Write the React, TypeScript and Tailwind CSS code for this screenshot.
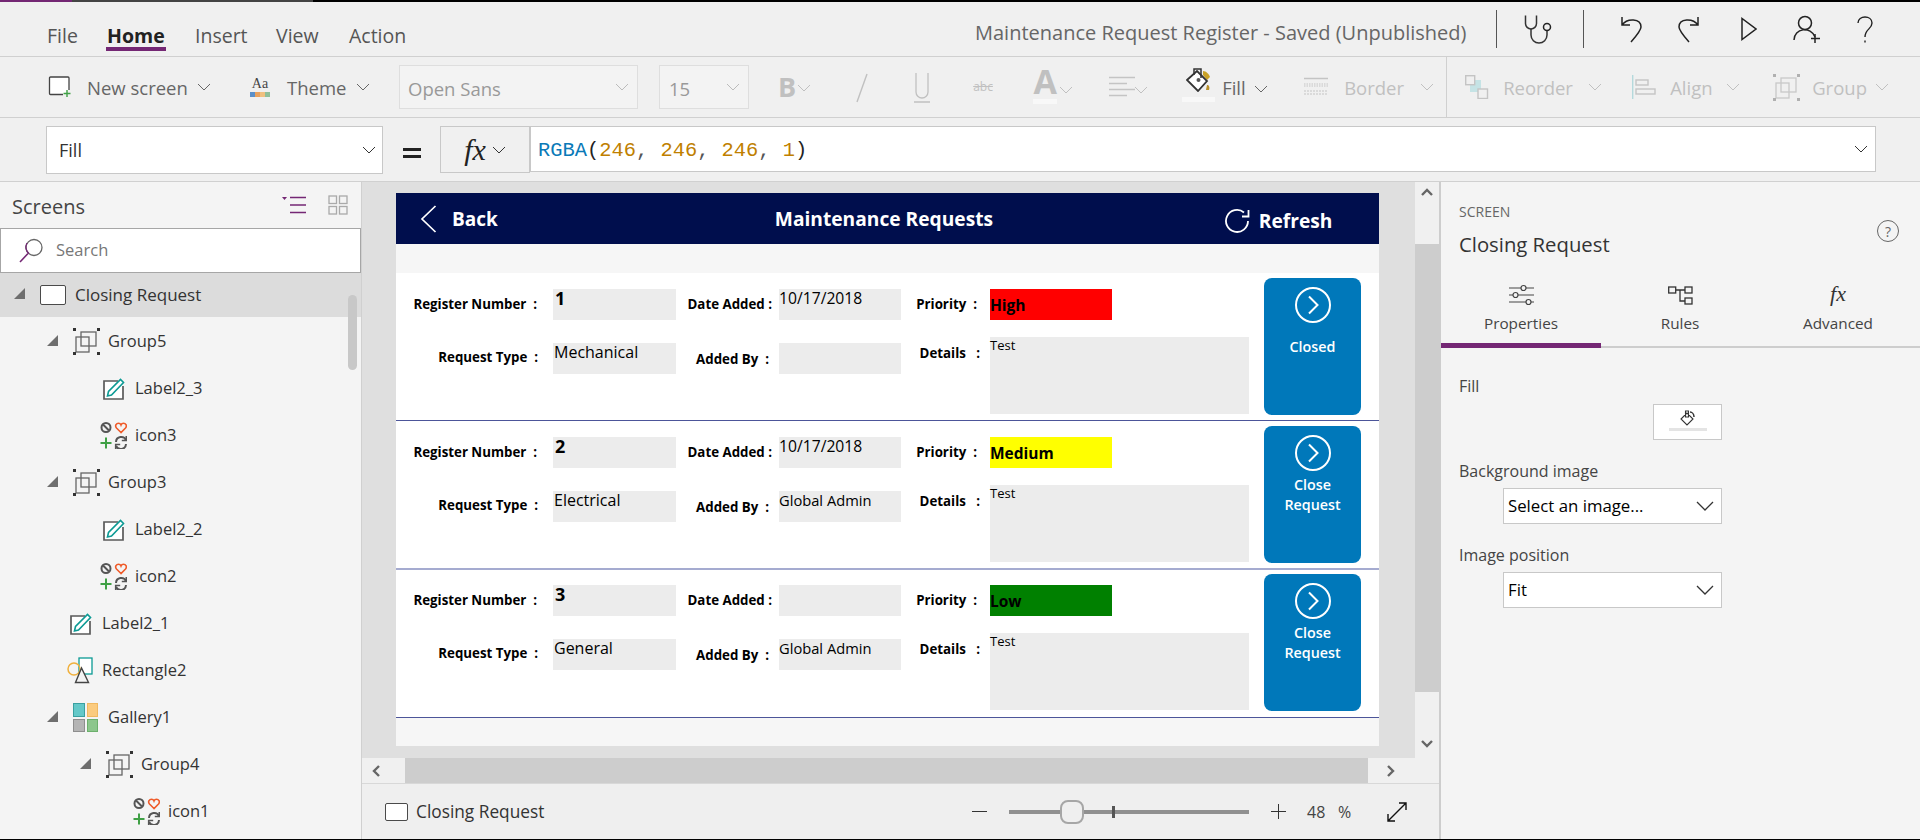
import type { ReactNode } from "react";

const purple = "#742774";

function Chevron({ className = "" }: { className?: string }) {
  return (
    <svg viewBox="0 0 14 8" className={"w-[14px] h-[8px] shrink-0 " + className}>
      <polyline points="1,1 7,7 13,1" fill="none" stroke="currentColor" strokeWidth="1" />
    </svg>
  );
}

function NewScreenIcon() {
  return (
    <svg viewBox="0 0 24 22" className="w-[24px] h-[22px]">
      <path d="M15 18.5H2.5a1 1 0 0 1-1-1V2a1 1 0 0 1 1-1H20a1 1 0 0 1 1 1v12" fill="#fff" stroke="#444" strokeWidth="1.3" />
      <path d="M19 14v7M15.5 17.5h7" stroke="#3fa045" strokeWidth="1.4" />
    </svg>
  );
}

function ThemeIcon() {
  return (
    <div className="w-[20px] flex flex-col items-center">
      <span className="font-['Liberation_Serif',serif] text-[14px] leading-[14px] text-[#444]">Aa</span>
      <div className="flex w-full h-[5px] mt-[1px]">
        <div className="flex-1 bg-[#5b8fc9]" />
        <div className="flex-1 bg-[#e8a15e]" />
        <div className="flex-1 bg-[#f0c080]" />
        <div className="flex-1 bg-[#8fbf9a]" />
      </div>
    </div>
  );
}

function BucketIcon() {
  return (
    <svg viewBox="0 0 25 24" className="w-[25px] h-[24px] shrink-0">
      <path d="M17 3c3 0 6 3 7 6l-3 3-4-5z" fill="#c9a227" />
      <path d="M21 17c2 0 3 2 2 5h-3z" fill="#b9902a" />
      <path d="M1 12 11 3l10 10-9 10z" fill="#fff" stroke="#333" strokeWidth="1.800" />
      <path d="M8 7V1h7v9" fill="none" stroke="#333" strokeWidth="1.500" />
      <circle cx="12.500" cy="12" r="2" fill="#555" />
    </svg>
  );
}

function BorderIcon() {
  return (
    <svg viewBox="0 0 24 20" className="w-[24px] h-[20px]" stroke="#c4c4c4" fill="none">
      <path d="M0 1.5h24" strokeWidth="1.5" />
      <path d="M0 7h24M0 9h24" strokeWidth="1" strokeDasharray="1.5 1" />
      <path d="M0 14h24M0 17h24" strokeWidth="1" strokeDasharray="2 1" />
    </svg>
  );
}

function ReorderIcon() {
  return (
    <svg viewBox="0 0 24 24" className="w-[24px] h-[24px]" fill="none">
      <rect x="5" y="5" width="11" height="12" fill="#c5e3e5" />
      <rect x="0.7" y="0.7" width="9" height="9" stroke="#c4c4c4" strokeWidth="1.4" fill="#f0f0f0" />
      <rect x="13" y="14" width="9.5" height="9.5" stroke="#c4c4c4" strokeWidth="1.4" fill="#f0f0f0" />
    </svg>
  );
}

function AlignIcon() {
  return (
    <svg viewBox="0 0 24 24" className="w-[24px] h-[24px]" fill="none">
      <path d="M0.7 0v24" stroke="#b4d9dc" strokeWidth="1.4" />
      <rect x="4" y="5" width="12" height="5" stroke="#c4c4c4" strokeWidth="1.4" />
      <rect x="4" y="14" width="19" height="5" stroke="#c4c4c4" strokeWidth="1.4" />
    </svg>
  );
}

function GroupIcon({ dark = false }: { dark?: boolean }) {
  const line = dark ? "#666" : "#c8c8c8";
  const dot = dark ? "#333" : "#b0b0b0";
  return (
    <svg viewBox="0 0 27 27" className="w-[27px] h-[27px]" fill="none">
      <rect x="8" y="4" width="15" height="14" stroke={line} strokeWidth="1.300" />
      <rect x="3" y="9" width="13" height="15" stroke={line} strokeWidth="1.300" />
      <rect x="0" y="0" width="3" height="3" fill={dot} />
      <rect x="24" y="0" width="3" height="3" fill={dot} />
      <rect x="0" y="24" width="3" height="3" fill={dot} />
      <rect x="24" y="24" width="3" height="3" fill={dot} />
    </svg>
  );
}

function Tri() {
  return (
    <svg viewBox="0 0 11 11" className="w-[11px] h-[11px] shrink-0 mr-[15px] mb-[3px]">
      <polygon points="11,0 11,11 0,11" fill="#6e6e6e" />
    </svg>
  );
}

function ScreenIcon({ small = false }: { small?: boolean }) {
  return <div className={(small ? "w-[23px] h-[18px]" : "w-[26px] h-[20px] mr-[9px]") + " shrink-0 bg-white border-[1.5px] border-[#4a4a4a] rounded-[2px]"} />;
}

function LabelIcon() {
  return (
    <svg viewBox="0 0 22 22" className="w-[22px] h-[22px] shrink-0 mr-[10px]" fill="none">
      <path d="M15 3H1v18h19V8" stroke="#5a5a5a" strokeWidth="1.700" fill="#fff" />
      <path d="M4.500 18l1-4.500L17.500 1.500l3 3L8.500 17z" fill="#fff" stroke="#0c9a94" strokeWidth="1.600" />
    </svg>
  );
}

function ControlIcon() {
  return (
    <svg viewBox="0 0 27 27" className="w-[27px] h-[27px] shrink-0 mr-[8px]" fill="none">
      <circle cx="6" cy="5.500" r="4.500" stroke="#555" strokeWidth="2" />
      <path d="M3 2.500l6 6" stroke="#555" strokeWidth="2" />
      <path d="M21 10.500 16.500 6C14.500 3.500 16.500 1.200 18.500 1.200 19.800 1.200 20.600 2 21 3 21.400 2 22.200 1.200 23.500 1.200 25.500 1.200 27.500 3.500 25.500 6z" stroke="#ef5a28" strokeWidth="1.600" />
      <path d="M6 15.500v11M.5 21h11" stroke="#3fa045" strokeWidth="2" />
      <path d="M16 20c.3-6 8-6.500 10-2M26 22c-.3 6-8 6.500-10 2" stroke="#555" strokeWidth="2" />
      <path d="M26.300 14v4.500h-4.500M15.700 27v-4.500h4.500" stroke="#555" strokeWidth="1.600" />
    </svg>
  );
}

function ShapesIcon() {
  return (
    <svg viewBox="0 0 27 27" className="w-[27px] h-[27px] shrink-0 mr-[8px]" fill="none">
      <rect x="12" y="1" width="13" height="16" fill="#fff" stroke="#0c9a94" strokeWidth="1.3" />
      <circle cx="7" cy="12" r="6" stroke="#f0b03c" strokeWidth="1.5" />
      <path d="M14.500 11 8.500 25.500h13z" fill="#f4f4f4" stroke="#444" strokeWidth="1.4" />
    </svg>
  );
}

function GalleryIcon() {
  return (
    <div className="w-[25px] h-[29px] mr-[10px] grid grid-cols-2 gap-[2px] shrink-0">
      <div className="bg-[#64c8c8] border border-[#3aa0a0]" />
      <div className="bg-[#fbcb7e] border border-[#f0b860]" />
      <div className="bg-[#b4b4b4] border border-[#8e8e8e]" />
      <div className="bg-[#8cc68c] border border-[#6cb06c]" />
    </div>
  );
}

type TreeItem = { label: string; pad: string; tri?: boolean; icon: ReactNode; selected?: boolean };

const tree: TreeItem[] = [
  { label: "Group5", pad: "pl-[47px]", tri: true, icon: <div className="mr-[8px]"><GroupIcon dark /></div> },
  { label: "Label2_3", pad: "pl-[103px]", icon: <LabelIcon /> },
  { label: "icon3", pad: "pl-[100px]", icon: <ControlIcon /> },
  { label: "Group3", pad: "pl-[47px]", tri: true, icon: <div className="mr-[8px]"><GroupIcon dark /></div> },
  { label: "Label2_2", pad: "pl-[103px]", icon: <LabelIcon /> },
  { label: "icon2", pad: "pl-[100px]", icon: <ControlIcon /> },
  { label: "Label2_1", pad: "pl-[70px]", icon: <LabelIcon /> },
  { label: "Rectangle2", pad: "pl-[67px]", icon: <ShapesIcon /> },
  { label: "Gallery1", pad: "pl-[47px]", tri: true, icon: <GalleryIcon /> },
  { label: "Group4", pad: "pl-[80px]", tri: true, icon: <div className="mr-[8px]"><GroupIcon dark /></div> },
  { label: "icon1", pad: "pl-[133px]", icon: <ControlIcon /> },
];

function TreeRow({ item }: { item: TreeItem }) {
  return (
    <div className={"h-[47px] flex items-center text-[16.5px] text-[#333] " + item.pad}>
      {item.tri && <Tri />}
      {item.icon}
      <span>{item.label}</span>
    </div>
  );
}

function LeftPanel() {
  return (
    <aside className="w-[362px] shrink-0 bg-[#f4f4f4] border-r border-[#d0d0d0] flex flex-col relative overflow-hidden">
      <div className="h-[46px] shrink-0 flex items-center pl-[12px] text-[#444] text-[20px]">
        <span className="w-[71px] mt-[4px]">Screens</span>
        <svg viewBox="0 0 24 18" className="w-[24px] h-[18px] ml-[199px]" fill="none">
          <polygon points="0,1 5,1 2.500,4" fill={purple} />
          <path d="M8 1.500h16M8 9h16M8 16.500h16" stroke={purple} strokeWidth="1.6" />
        </svg>
        <svg viewBox="0 0 20 20" className="w-[20px] h-[20px] ml-[22px]" fill="none" stroke="#aaa" strokeWidth="1.3">
          <rect x="1" y="1" width="7.500" height="7.500" />
          <rect x="11.500" y="1" width="7.500" height="7.500" />
          <rect x="1" y="11.500" width="7.500" height="7.500" />
          <rect x="11.500" y="11.500" width="7.500" height="7.500" />
        </svg>
      </div>
      <div className="h-[45px] shrink-0 bg-white border border-[#a6a6a6] flex items-center pl-[18px]">
        <svg viewBox="0 0 25 25" className="w-[25px] h-[25px]" fill="none">
          <circle cx="15" cy="9.500" r="8" stroke="#666" strokeWidth="1.3" />
          <path d="M9 15.500 1 24" stroke={purple} strokeWidth="1.6" />
          <path d="M10 15.500A8 8 0 0 1 8 5" stroke={purple} strokeWidth="1.3" />
        </svg>
        <span className="ml-[12px] text-[16.500px] text-[#777]">Search</span>
      </div>
      <div className="h-[44px] shrink-0 mb-[1px] bg-[#dcdcdc] flex items-center pl-[14px] text-[17px] text-[#333]">
        <Tri />
        <ScreenIcon />
        <span>Closing Request</span>
      </div>
      {tree.map((item) => (
        <TreeRow key={item.label} item={item} />
      ))}
      <div className="absolute left-[348px] top-[113px] w-[9px] h-[75px] rounded-full bg-[#c8c8c8]" />
    </aside>
  );
}

type Req = {
  num: string;
  type: string;
  date: string;
  by: string;
  priority: string;
  color: string;
  action: string[];
  line: string;
  height: string;
  top: string;
};

const requests: Req[] = [
  { num: "1", type: "Mechanical", date: "10/17/2018", by: "", priority: "High", color: "bg-[#ff0000]", action: ["Closed"], line: "border-b border-[#4c5599]", height: "h-[148px]", top: "pt-[16px]" },
  { num: "2", type: "Electrical", date: "10/17/2018", by: "Global Admin", priority: "Medium", color: "bg-[#ffff00]", action: ["Close", "Request"], line: "border-b-2 border-[#a5abd0]", height: "h-[149px]", top: "pt-[16px]" },
  { num: "3", type: "General", date: "", by: "Global Admin", priority: "Low", color: "bg-[#008000]", action: ["Close", "Request"], line: "border-b border-[#4c5599]", height: "h-[148px]", top: "pt-[15px]" },
];

function FieldLabel({ text, className }: { text: string; className: string }) {
  return <div className={"h-[31px] flex items-center justify-end pt-[1px] font-bold text-[13.300px] text-black whitespace-pre " + className}>{text}</div>;
}

function RequestRow({ r }: { r: Req }) {
  return (
    <div className={"bg-white flex text-black " + r.height + " " + r.line + " " + r.top}>
      <div className="w-[157px] shrink-0">
        <FieldLabel text="Register Number  :" className="pr-[16px]" />
        <FieldLabel text="Request Type  :" className="pr-[15px] mt-[22px]" />
      </div>
      <div className="w-[123px] shrink-0">
        <div className="h-[31px] bg-[#ececec] pl-[2px] font-bold text-[18px] leading-[19px]">{r.num}</div>
        <div className="h-[31px] bg-[#ececec] pl-[1px] mt-[23px] text-[16px] leading-[19px] font-medium">{r.type}</div>
      </div>
      <div className="w-[103px] shrink-0">
        <FieldLabel text="Date Added :" className="pr-[7px]" />
        <FieldLabel text="Added By  :" className="pr-[10px] mt-[24px]" />
      </div>
      <div className="w-[122px] shrink-0">
        <div className="h-[31px] bg-[#ececec] text-[15.700px] leading-[18px]">{r.date}</div>
        <div className="h-[31px] bg-[#ececec] mt-[23px] text-[14.700px] leading-[18px] font-medium">{r.by}</div>
      </div>
      <div className="w-[89px] shrink-0">
        <FieldLabel text="Priority  :" className="pr-[13px]" />
        <FieldLabel text="Details   :" className="pr-[10px] mt-[18px]" />
      </div>
      <div className="w-[259px] shrink-0">
        <div className={"w-[122px] h-[31px] flex items-center font-bold text-[15.500px] pt-[2px] " + r.color}>{r.priority}</div>
        <div className="h-[77px] bg-[#ececec] mt-[17px] text-[13px] leading-[16px] font-medium">Test</div>
      </div>
      <div className="ml-[15px] w-[97px] h-[137px] -mt-[11px] rounded-[8px] bg-[#0078ba] flex flex-col items-center pt-[8px] text-white font-semibold text-[14.300px] leading-[20px]">
        <svg viewBox="0 0 38 38" className="w-[38px] h-[38px] mb-[3px] shrink-0" fill="none" stroke="#fff">
          <circle cx="19" cy="19" r="17" strokeWidth="2" />
          <path d="M15 10.500 23.500 19 15 27.500" strokeWidth="2" />
        </svg>
        <div className="h-[40px] flex flex-col items-center justify-center">
          {r.action.map((t) => (
            <span key={t}>{t}</span>
          ))}
        </div>
      </div>
    </div>
  );
}

function AppPreview() {
  return (
    <div className="w-[983px] h-[553px] bg-[#f6f6f6] flex flex-col">
      <div className="h-[51px] shrink-0 bg-[#000e4d] flex items-center text-white font-bold text-white">
        <svg viewBox="0 0 17 28" className="w-[17px] h-[28px] ml-[24px]" fill="none" stroke="#fff" strokeWidth="1.7">
          <path d="M15.500 1 2 14l13.500 13" />
        </svg>
        <span className="ml-[15px] text-[19px] mt-[1px]">Back</span>
        <span className="ml-[277px] w-[218px] text-[19.200px] whitespace-nowrap mt-[1px]">Maintenance Requests</span>
        <svg viewBox="0 0 26 26" className="w-[26px] h-[26px] ml-[231px] mt-[5px]" fill="none" stroke="#fff" strokeWidth="1.8">
          <path d="M24 13a11 11 0 1 1-4-8.500" />
          <path d="M24.500 2v6.500H18" />
        </svg>
        <span className="ml-[9px] text-[19.200px] mt-[6px]">Refresh</span>
      </div>
      <div className="h-[29px] shrink-0" />
      {requests.map((r) => (
        <RequestRow key={r.num} r={r} />
      ))}
    </div>
  );
}

function ToolLabel({ children, className = "" }: { children: ReactNode; className?: string }) {
  return <span className={"text-[18.500px] whitespace-nowrap mt-[2px] " + className}>{children}</span>;
}

function Toolbar() {
  return (
    <div className="h-[61px] shrink-0 border-b border-[#d0d0d0] flex items-center pl-[48px] text-[#666]">
      <NewScreenIcon />
      <ToolLabel className="ml-[15px] w-[101px]">New screen</ToolLabel>
      <Chevron className="ml-[9px]" />
      <div className="ml-[39px]"><ThemeIcon /></div>
      <ToolLabel className="ml-[17px] w-[60px]">Theme</ToolLabel>
      <Chevron className="ml-[9px]" />
      <div className="ml-[29px] w-[239px] h-[44px] border border-[#dedede] bg-[#f3f3f3] flex items-center justify-between px-[8px] text-[#999]">
        <span className="text-[18.500px] mt-[3px]">Open Sans</span>
        <Chevron className="text-[#bbb]" />
      </div>
      <div className="ml-[21px] w-[90px] h-[44px] border border-[#dedede] bg-[#f3f3f3] flex items-center justify-between pl-[9px] pr-[8px] text-[#999]">
        <span className="text-[18.500px] mt-[3px]">15</span>
        <Chevron className="text-[#bbb]" />
      </div>
      <div className="flex items-center text-[#c0c0c0]">
        <span className="ml-[29px] text-[27px] font-bold">B</span>
        <Chevron className="ml-[1px] mt-[2px]" />
        <svg viewBox="0 0 12 30" className="w-[12px] h-[30px] ml-[45px] mt-[2px]" fill="none" stroke="#c0c0c0" strokeWidth="1.4">
          <path d="M11 1 1 29" />
        </svg>
        <svg viewBox="0 0 18 32" className="w-[18px] h-[32px] ml-[45px] mt-[2px]" fill="none" stroke="#c0c0c0" strokeWidth="1.3">
          <path d="M3 1v19a6 6 0 0 0 12 0V1M1 30h16" />
        </svg>
        <span className="ml-[42px] text-[12px] line-through w-[23px]">abc</span>
        <span className="ml-[37px] text-[34px] font-bold leading-[36px] border-b-[5px] border-[#f8f8f8] w-[24px] flex justify-center -mt-[8px]">A</span>
        <Chevron className="ml-[2px] mt-[6px]" />
        <svg viewBox="0 0 26 22" className="w-[26px] h-[22px] ml-[36px]" fill="none" stroke="#c4c4c4" strokeWidth="1.3">
          <path d="M0 1.500h26M0 7.500h18M0 13.500h26M0 19.500h18" />
        </svg>
        <Chevron className="-ml-[1px] mt-[6px]" />
      </div>
      <div className="ml-[37px] w-[26px] flex flex-col items-center -mt-[5px]">
        <BucketIcon />
        <div className="w-[33px] h-[5px] shrink-0 bg-[#f8f8f8] mt-[5px]" />
      </div>
      <ToolLabel className="ml-[11px] w-[21px]">Fill</ToolLabel>
      <Chevron className="ml-[11px] mt-[4px]" />
      <div className="ml-[36px]"><BorderIcon /></div>
      <ToolLabel className="ml-[16px] w-[56px] text-[#c0c0c0]">Border</ToolLabel>
      <Chevron className="ml-[20px] text-[#c0c0c0]" />
      <div className="ml-[12px] h-[60px] border-l border-[#d0d0d0]" />
      <div className="ml-[18px]"><ReorderIcon /></div>
      <ToolLabel className="ml-[14px] w-[69px] text-[#c0c0c0]">Reorder</ToolLabel>
      <Chevron className="ml-[16px] text-[#c0c0c0]" />
      <div className="ml-[30px]"><AlignIcon /></div>
      <ToolLabel className="ml-[14px] w-[44px] text-[#c0c0c0]">Align</ToolLabel>
      <Chevron className="ml-[12px] text-[#c0c0c0]" />
      <div className="ml-[33px]"><GroupIcon /></div>
      <ToolLabel className="ml-[12px] w-[55px] text-[#c0c0c0]">Group</ToolLabel>
      <Chevron className="ml-[8px] text-[#c0c0c0]" />
    </div>
  );
}

function TopBar() {
  const stroke = "#222";
  return (
    <div className="h-[55px] shrink-0 border-b border-[#d0d0d0] flex items-center pl-[47px] text-[19.500px] text-[#555]">
      <span className="w-[60px] mt-[14px]">File</span>
      <span className="w-[88px] mt-[14px] font-bold text-[#222] relative">
        Home
        <span className="absolute left-[-1px] top-[26px] w-[60px] h-[4px] bg-[#742774]" />
      </span>
      <span className="w-[81px] mt-[14px]">Insert</span>
      <span className="w-[73px] mt-[14px]">View</span>
      <span className="w-[626px] mt-[14px]">Action</span>
      <span className="w-[521px] mt-[8px] text-[20px] text-[#666] whitespace-nowrap">Maintenance Request Register - Saved (Unpublished)</span>
      <div className="h-[38px] border-l border-[#555]" />
      <svg viewBox="0 0 28 30" className="w-[28px] h-[30px] ml-[27px]" fill="none" stroke="#333" strokeWidth="1.5">
        <path d="M1.500 1.500v8a5.500 5.500 0 0 0 11 0v-8" />
        <path d="M7 15v6a8 8 0 0 0 16 0v-4" />
        <circle cx="23" cy="13" r="3.500" stroke="#222" />
      </svg>
      <div className="h-[38px] border-l border-[#555] ml-[31px]" />
      <svg viewBox="0 0 22 28" className="w-[22px] h-[28px] ml-[37px]" fill="none" stroke={stroke} strokeWidth="1.5">
        <path d="M1 2v8h8M1 10C6 3 20 3 20 12c0 3-3 7-10 15" />
      </svg>
      <svg viewBox="0 0 22 28" className="w-[22px] h-[28px] ml-[34px]" fill="none" stroke={stroke} strokeWidth="1.5">
        <path d="M21 2v8h-8M21 10C16 3 2 3 2 12c0 3 3 7 10 15" />
      </svg>
      <svg viewBox="0 0 16 24" className="w-[16px] h-[24px] ml-[42px]" fill="none" stroke={stroke} strokeWidth="1.5">
        <path d="M1 1.500v21L15 12z" />
      </svg>
      <svg viewBox="0 0 28 28" className="w-[28px] h-[28px] ml-[36px]" fill="none" stroke={stroke} strokeWidth="1.5">
        <circle cx="12" cy="8" r="6.500" />
        <path d="M1 25c0-12 17-14 21-3" />
        <path d="M22 19v9M18 23.500h9" />
      </svg>
      <svg viewBox="0 0 16 28" className="w-[16px] h-[28px] ml-[36px]" fill="none" stroke={stroke} strokeWidth="1.4">
        <path d="M1 8C1 0 15 0 15 8c0 6-7 6-7 14" />
        <path d="M8 25.500v2" />
      </svg>
    </div>
  );
}

function FormulaBar() {
  return (
    <div className="h-[64px] shrink-0 border-b border-[#d0d0d0] flex items-start pt-[8px] pl-[46px]">
      <div className="w-[337px] h-[48px] bg-white border border-[#c8c8c8] flex items-center justify-between pl-[12px] pr-[6px] text-[18px] text-[#333]">
        <span>Fill</span>
        <Chevron className="text-[#333]" />
      </div>
      <div className="w-[18px] ml-[20px] mt-[22px] h-[10px] border-y-[3px] border-[#222]" />
      <div className="ml-[19px] w-[90px] h-[47px] bg-[#f0f0f0] border border-[#c8c8c8] flex items-center justify-center gap-[6px] text-[#222]">
        <span className="font-['Liberation_Serif',serif] italic text-[30px] leading-[30px]">fx</span>
        <Chevron className="text-[#333]" />
      </div>
      <div className="w-[1346px] h-[46px] bg-white border border-[#c8c8c8] flex items-center justify-between pl-[7px] pr-[7px]">
        <span className="font-['Liberation_Mono',monospace] text-[20.400px] mt-[5px]">
          <span className="text-[#0a7ab8]">RGBA</span>
          <span className="text-[#222]">(</span>
          <span className="text-[#c07f00]">246</span>
          <span className="text-[#555]">, </span>
          <span className="text-[#c07f00]">246</span>
          <span className="text-[#555]">, </span>
          <span className="text-[#c07f00]">246</span>
          <span className="text-[#555]">, </span>
          <span className="text-[#c07f00]">1</span>
          <span className="text-[#222]">)</span>
        </span>
        <Chevron className="text-[#333]" />
      </div>
    </div>
  );
}

function VerticalScroll() {
  return (
    <div className="w-[24px] shrink-0 bg-[#f0f0f0] flex flex-col">
      <div className="h-[62px] flex justify-center pt-[6px]">
        <svg viewBox="0 0 12 8" className="w-[12px] h-[8px]" fill="none" stroke="#666" strokeWidth="2.400">
          <path d="M1 7l5-5 5 5" />
        </svg>
      </div>
      <div className="h-[448px] bg-[#cdcdcd]" />
      <div className="flex-1 flex justify-center items-end pb-[10px]">
        <svg viewBox="0 0 12 8" className="w-[12px] h-[8px]" fill="none" stroke="#666" strokeWidth="2.400">
          <path d="M1 1l5 5 5-5" />
        </svg>
      </div>
    </div>
  );
}

function HorizontalScroll() {
  return (
    <div className="h-[25px] shrink-0 flex bg-[#f0f0f0]">
      <div className="w-[43px] flex items-center justify-center pr-[16px]">
        <svg viewBox="0 0 8 12" className="w-[8px] h-[12px]" fill="none" stroke="#666" strokeWidth="2.400">
          <path d="M7 1 2 6l5 5" />
        </svg>
      </div>
      <div className="w-[963px] bg-[#cdcdcd]" />
      <div className="w-[46px] flex items-center justify-center">
        <svg viewBox="0 0 8 12" className="w-[8px] h-[12px]" fill="none" stroke="#666" strokeWidth="2.400">
          <path d="M1 1l5 5-5 5" />
        </svg>
      </div>
    </div>
  );
}

function ZoomBar() {
  return (
    <div className="flex-1 bg-[#efefef] border-t border-[#d8d8d8] flex items-center pl-[23px] text-[16px] text-[#444]">
      <ScreenIcon small />
      <span className="ml-[8px] w-[556px] text-[17.300px] text-[#333]">Closing Request</span>
      <div className="w-[15px] h-[1px] bg-[#333]" />
      <div className="ml-[22px] w-[240px] h-[4px] bg-[#909090] relative">
        <div className="absolute left-[51px] -top-[10px] w-[24px] h-[24px] rounded-[8px] border-2 border-[#a6a6a6] bg-[#efefef]" />
        <div className="absolute left-[103px] -top-[4px] w-[3px] h-[12px] bg-[#555]" />
      </div>
      <svg viewBox="0 0 15 15" className="w-[15px] h-[15px] ml-[22px]" stroke="#333" strokeWidth="1">
        <path d="M7.500 0v15M0 7.500h15" />
      </svg>
      <span className="ml-[21px] w-[31px]">48</span>
      <span>%</span>
      <svg viewBox="0 0 22 22" className="w-[22px] h-[22px] ml-[35px]" fill="none" stroke="#111" strokeWidth="1.4">
        <path d="M2 20 20 2M13 2h7v7M2 13v7h7" />
      </svg>
    </div>
  );
}

function SelectBox({ value }: { value: string }) {
  return (
    <div className="ml-[44px] w-[219px] h-[36px] bg-white border border-[#c8c8c8] flex items-center justify-between pl-[4px] pr-[7px] text-[16.800px] text-black">
      <span>{value}</span>
      <svg viewBox="0 0 18 10" className="w-[18px] h-[10px]" fill="none" stroke="#333" strokeWidth="1.300">
        <path d="M1 1l8 8 8-8" />
      </svg>
    </div>
  );
}

function RightPanel() {
  return (
    <aside className="flex-1 bg-[#f4f4f4] border-l-2 border-[#cdcdcd] flex flex-col text-[#444]">
      <div className="pl-[18px] pr-[21px] pt-[21px] flex justify-between">
        <div>
          <div className="text-[14px] leading-[18px] text-[#666]">SCREEN</div>
          <div className="text-[20.300px] leading-[26px] mt-[10px] text-[#333]">Closing Request</div>
        </div>
        <div className="w-[22px] h-[22px] mt-[17px] rounded-full border border-[#666] flex items-center justify-center text-[14px] text-[#666]">?</div>
      </div>
      <div className="h-[72px] mt-[19px] flex border-b-2 border-[#cdcdcd] text-[15.300px] text-[#444]">
        <div className="w-[160px] flex flex-col items-center border-b-[5px] border-[#742774] -mb-[2px]">
          <svg viewBox="0 0 25 22" className="w-[25px] h-[22px] mt-[8px] shrink-0" fill="none" stroke="#444" strokeWidth="1.200">
            <path d="M0 4h12M17 4h8M0 11h4M9 11h16M0 18h17M22 18h3" />
            <circle cx="14.500" cy="4" r="2.500" />
            <circle cx="6.500" cy="11" r="2.500" />
            <circle cx="19.500" cy="18" r="2.500" />
          </svg>
          <span className="mt-[6px]">Properties</span>
        </div>
        <div className="w-[158px] flex flex-col items-center">
          <svg viewBox="0 0 25 22" className="w-[25px] h-[22px] mt-[8px] shrink-0" fill="none" stroke="#333" strokeWidth="1.300">
            <rect x="0.700" y="3" width="7" height="6" />
            <rect x="17" y="3" width="7" height="6" />
            <rect x="17" y="14" width="7" height="6" />
            <path d="M8 6h9M12 6v11h5" />
          </svg>
          <span className="mt-[6px]">Rules</span>
        </div>
        <div className="w-[158px] flex flex-col items-center">
          <span className="font-['Liberation_Serif',serif] italic text-[22px] leading-[26px] mt-[5px] text-[#333]">fx</span>
          <span className="mt-[5px]">Advanced</span>
        </div>
      </div>
      <div className="pl-[18px] flex flex-col text-[16px] text-[#444]">
        <div className="mt-[28px] leading-[20px]">Fill</div>
        <div className="ml-[194px] mt-[8px] w-[69px] h-[36px] bg-white border border-[#c8c8c8] flex flex-col items-center pt-[5px]">
          <svg viewBox="0 0 16 16" className="w-[16px] h-[16px]" fill="none" stroke="#333" strokeWidth="1.100">
            <path d="M7 3 1 9l6 6 6-6zM5.500 1h3v6h-3z" fill="#fff" />
            <path d="M10 2c2 0 4 2 4 5" strokeWidth="1.500" />
          </svg>
          <div className="w-[38px] h-[3px] mt-[2px] bg-[#e4e4e4]" />
        </div>
        <div className="mt-[21px] leading-[20px]">Background image</div>
        <div className="mt-[7px]"><SelectBox value="Select an image..." /></div>
        <div className="mt-[21px] leading-[20px]">Image position</div>
        <div className="mt-[7px]"><SelectBox value="Fit" /></div>
      </div>
    </aside>
  );
}

export default function App() {
  return (
    <div className="w-[1920px] h-[840px] overflow-hidden flex flex-col bg-[#f0f0f0] font-['Open_Sans',sans-serif]">
      <div className="h-[2px] shrink-0 flex bg-black">
        <div className="w-[72px] bg-[#742774]" />
        <div className="w-[241px] bg-[#444]" />
      </div>
      <TopBar />
      <Toolbar />
      <FormulaBar />
      <div className="flex-1 flex min-h-0">
        <LeftPanel />
        <div className="w-[1077px] shrink-0 flex flex-col">
          <div className="h-[576px] shrink-0 flex">
            <div className="flex-1 bg-[#dfdfdf] pt-[11px] pl-[34px] overflow-hidden">
              <AppPreview />
            </div>
            <VerticalScroll />
          </div>
          <HorizontalScroll />
          <ZoomBar />
        </div>
        <RightPanel />
      </div>
      <div className="h-[1px] shrink-0 bg-black" />
    </div>
  );
}
